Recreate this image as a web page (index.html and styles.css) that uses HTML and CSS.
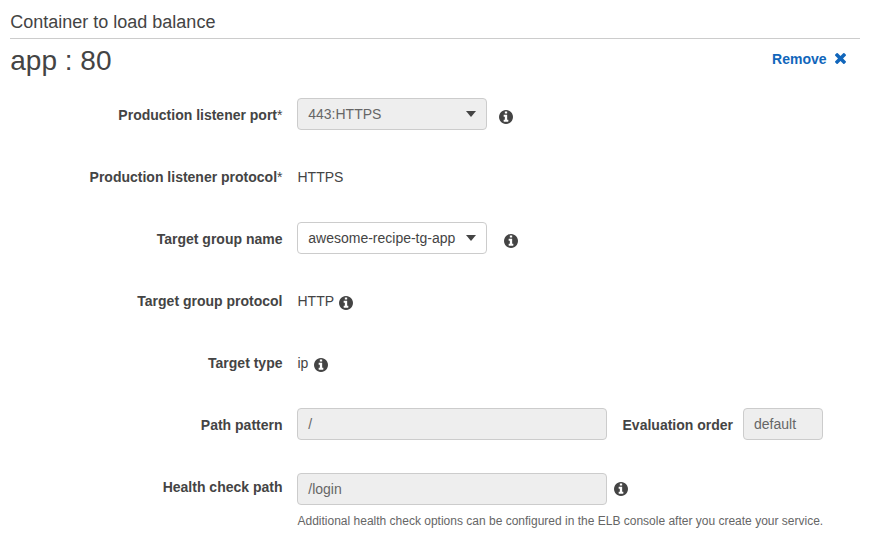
FILE: index.html
```html
<!DOCTYPE html>
<html lang="en">
<head>
<meta charset="utf-8">
<title>Container to load balance</title>
<link rel="stylesheet" href="styles.css">
</head>
<body>
<svg class="defs" aria-hidden="true">
  <symbol id="info" viewBox="0 128 1536 1536"><path d="M1024 1376v-160q0-14-9-23t-23-9h-96v-512q0-14-9-23t-23-9h-320q-14 0-23 9t-9 23v160q0 14 9 23t23 9h96v320h-96q-14 0-23 9t-9 23v160q0 14 9 23t23 9h448q14 0 23-9t9-23zm-128-896v-160q0-14-9-23t-23-9h-192q-14 0-23 9t-9 23v160q0 14 9 23t23 9h192q14 0 23-9t9-23zm640 416q0 209-103 385.5t-279.5 279.5-385.5 103-385.5-103-279.5-279.5-103-385.5 103-385.5 279.5-279.5 385.5-103 385.5 103 279.5 279.5 103 385.5z"/></symbol>
</svg>
<main class="panel">
  <h2 class="title">Container to load balance</h2>
  <header class="head">
    <h1 class="name">app : 80</h1>
    <a class="remove">Remove
      <svg class="times" viewBox="110 366 1188 1188"><path d="M1298 1322q0 40-28 68l-136 136q-28 28-68 28t-68-28l-294-294-294 294q-28 28-68 28t-68-28l-136-136q-28-28-28-68t28-68l294-294-294-294q-28-28-28-68t28-68l136-136q28-28 68-28t68 28l294 294 294-294q28-28 68-28t68 28l136 136q28 28 28 68t-28 68l-294 294 294 294q28 28 28 68z"/></svg>
    </a>
  </header>
  <form class="form">
    <div class="row">
      <label class="label">Production listener port<span class="star">*</span></label>
      <div class="select disabled"><span>443:HTTPS</span><i class="caret"></i></div>
      <svg class="info gap-m"><use href="#info"/></svg>
    </div>
    <div class="row">
      <label class="label">Production listener protocol<span class="star">*</span></label>
      <span class="value">HTTPS</span>
    </div>
    <div class="row">
      <label class="label">Target group name</label>
      <div class="select"><span>awesome-recipe-tg-app</span><i class="caret"></i></div>
      <svg class="info gap-l"><use href="#info"/></svg>
    </div>
    <div class="row">
      <label class="label">Target group protocol</label>
      <span class="value">HTTP</span>
      <svg class="info gap-s"><use href="#info"/></svg>
    </div>
    <div class="row">
      <label class="label">Target type</label>
      <span class="value">ip</span>
      <svg class="info gap-ip"><use href="#info"/></svg>
    </div>
    <div class="row">
      <label class="label">Path pattern</label>
      <div class="field disabled">/</div>
      <label class="sublabel">Evaluation order</label>
      <div class="field small disabled">default</div>
    </div>
    <div class="row last">
      <label class="label">Health check path</label>
      <div class="stack">
        <div class="line">
          <div class="field disabled">/login</div>
          <svg class="info gap-f"><use href="#info"/></svg>
        </div>
        <p class="hint">Additional health check options can be configured in the ELB console after you create your service.</p>
      </div>
    </div>
  </form>
</main>
</body>
</html>
```
FILE: styles.css
```css
* { box-sizing: border-box; }
body {
  margin: 0;
  background: #fff;
  color: #444;
  font: 14px/20px "Liberation Sans", Arial, sans-serif;
}
.defs { display: none; }
.panel { width: 850px; margin: 0 10px; }
.title {
  margin: 0;
  height: 39px;
  padding: 12px 0 0 0.25px;
  border-bottom: 1px solid #ccc;
  font-size: 18px;
  font-weight: normal;
}
.head {
  display: flex;
  justify-content: space-between;
  height: 59px;
  padding-right: 14.5px;
}
.name {
  margin: 0;
  padding: 4px 0 0 0.25px;
  font-size: 28px;
  line-height: 36px;
  font-weight: normal;
}
.remove {
  display: flex;
  align-items: center;
  gap: 8px;
  height: 20px;
  margin-top: 10px;
  color: #1166bb;
  font-weight: bold;
}
.times { width: 11px; height: 11px; margin-top: -1px; fill: currentColor; }
.row { display: flex; height: 62px; }
.label {
  width: 272.5px;
  margin-right: 14.5px;
  padding-top: 7px;
  text-align: right;
  font-weight: bold;
}
.star { font-weight: normal; }
.value { padding: 7px 0 0 0.5px; }
.select, .field {
  height: 32px;
  padding: 0 10px 0 10.25px;
  border: 1px solid #ccc;
  border-radius: 4px;
  line-height: 30px;
}
.select {
  display: flex;
  align-items: center;
  justify-content: space-between;
  width: 190px;
}
.field { width: 310px; }
.small { width: 80px; padding-left: 10px; }
.disabled { background: #eee; color: #666; }
.caret {
  border: solid transparent;
  border-width: 6px 5.5px 0;
  border-top-color: #444;
}
.info { width: 14px; height: 14px; margin-top: 12px; fill: #444; }
.gap-s { margin-left: 5px; }
.gap-ip { margin-left: 6px; }
.gap-m { margin-left: 12px; }
.gap-l { margin-left: 17px; }
.gap-f { margin-left: 7px; margin-top: 9px; }
.sublabel { width: 126px; margin-right: 10px; padding-top: 7px; text-align: right; font-weight: bold; }
.stack { padding-top: 3px; }
.line { display: flex; }
.hint {
  margin: 8px 0 0 0.5px;
  color: #666;
  font-size: 12px;
  line-height: 16px;
  white-space: nowrap;
}
```
